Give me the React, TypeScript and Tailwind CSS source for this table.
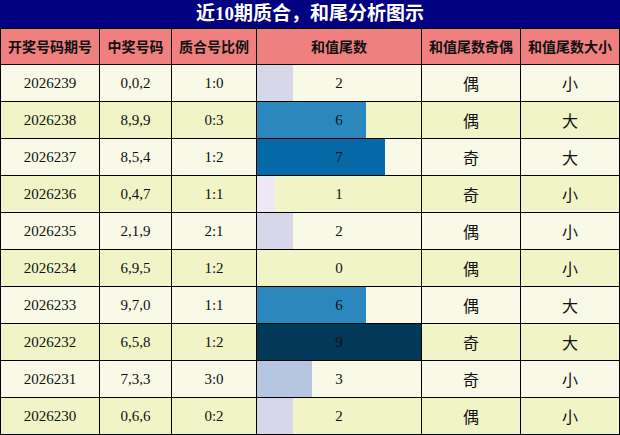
import React from "react";

type Row = { id: string; nums: string; ratio: string; tail: number; oe: string; bs: string };

const rows: Row[] = [
  { id: "2026239", nums: "0,0,2", ratio: "1:0", tail: 2, oe: "偶", bs: "小" },
  { id: "2026238", nums: "8,9,9", ratio: "0:3", tail: 6, oe: "偶", bs: "大" },
  { id: "2026237", nums: "8,5,4", ratio: "1:2", tail: 7, oe: "奇", bs: "大" },
  { id: "2026236", nums: "0,4,7", ratio: "1:1", tail: 1, oe: "奇", bs: "小" },
  { id: "2026235", nums: "2,1,9", ratio: "2:1", tail: 2, oe: "偶", bs: "小" },
  { id: "2026234", nums: "6,9,5", ratio: "1:2", tail: 0, oe: "偶", bs: "小" },
  { id: "2026233", nums: "9,7,0", ratio: "1:1", tail: 6, oe: "偶", bs: "大" },
  { id: "2026232", nums: "6,5,8", ratio: "1:2", tail: 9, oe: "奇", bs: "大" },
  { id: "2026231", nums: "7,3,3", ratio: "3:0", tail: 3, oe: "奇", bs: "小" },
  { id: "2026230", nums: "0,6,6", ratio: "0:2", tail: 2, oe: "偶", bs: "小" },
];

const barClass: Record<number, string> = {
  0: "bg-transparent",
  1: "bg-[#ede8f3]",
  2: "bg-[#d7d7e9]",
  3: "bg-[#b6c6e0]",
  4: "bg-[#8fb3d6]",
  5: "bg-[#5a9fcb]",
  6: "bg-[#2a88bf]",
  7: "bg-[#0469a6]",
  8: "bg-[#045282]",
  9: "bg-[#023858]",
};

const serif = "font-['Liberation_Serif','Noto_Sans_CJK_SC',serif]";
const cjk = "font-['Noto_Sans_CJK_SC',sans-serif]";

export default function App() {
  const headers = ["开奖号码期号", "中奖号码", "质合号比例", "和值尾数", "和值尾数奇偶", "和值尾数大小"];
  return (
    <div className="w-[620px] h-[435px] bg-black overflow-hidden">
      <div
        className={`h-[28px] bg-[#000080] text-white text-[19px] font-bold flex items-center justify-center ${serif}`}
      >
        近10期质合，和尾分析图示
      </div>
      <div className="grid grid-cols-[98px_71px_84px_164px_98px_98px] grid-rows-[35px_repeat(10,36px)] gap-px p-px bg-black">
        {headers.map((h) => (
          <div
            key={h}
            className={`bg-[#f08080] flex items-center justify-center text-[14px] font-bold text-[#111] ${cjk}`}
          >
            {h}
          </div>
        ))}
        {rows.map((r, i) => {
          const bg = i % 2 === 0 ? "bg-[#f8fae7]" : "bg-[#f0f4c6]";
          return (
            <React.Fragment key={r.id}>
              <div className={`${bg} flex items-center justify-center text-[15px] text-[#111] ${serif}`}>{r.id}</div>
              <div className={`${bg} flex items-center justify-center text-[15px] text-[#111] ${serif}`}>{r.nums}</div>
              <div className={`${bg} flex items-center justify-center text-[15px] text-[#111] ${serif}`}>{r.ratio}</div>
              <div className={`${bg} relative flex items-center justify-center text-[15px] text-[#111] ${serif}`}>
                <div
                  className={`absolute left-0 top-0 bottom-0 ${barClass[r.tail]}`}
                  style={{ width: `${(r.tail / 9) * 100}%` }}
                />
                <span className="relative">{r.tail}</span>
              </div>
              <div className={`${bg} flex items-center justify-center text-[16px] text-[#111] ${cjk}`}>{r.oe}</div>
              <div className={`${bg} flex items-center justify-center text-[16px] text-[#111] ${cjk}`}>{r.bs}</div>
            </React.Fragment>
          );
        })}
      </div>
    </div>
  );
}
